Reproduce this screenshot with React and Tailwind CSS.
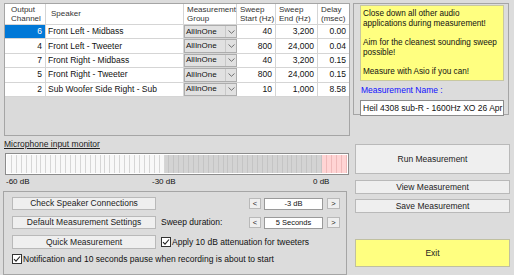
import React from 'react';

// ── Data ─────────────────────────────────────────────────────────────────────
const rows = [
  { ch: 6, name: 'Front Left - Midbass', start: '40', end: '3,200', delay: '0.00' },
  { ch: 4, name: 'Front Left - Tweeter', start: '800', end: '24,000', delay: '0.04' },
  { ch: 7, name: 'Front Right - Midbass', start: '40', end: '3,200', delay: '0.15' },
  { ch: 5, name: 'Front Right - Tweeter', start: '800', end: '24,000', delay: '0.15' },
  { ch: 2, name: 'Sub Woofer Side Right - Sub', start: '10', end: '1,000', delay: '8.58' },
];

const segments = Array.from({ length: 69 }, (_, i) => (i < 32 ? 'low' : i < 64 ? 'mid' : 'high'));

// ── Small pieces ─────────────────────────────────────────────────────────────
const Button = ({ children, className = '' }) => (
  <div className={`flex items-center justify-center border text-[#222] ${className}`}>
    {children}
  </div>
);

const Checkbox = () => (
  <span className="w-[10px] h-[10px] bg-white border border-[#333] flex items-center justify-center shrink-0">
    <svg width="8" height="8" viewBox="0 0 8 8">
      <path d="M1 4.2 L3 6.2 L7 1.5" fill="none" stroke="#222" strokeWidth="1.1" />
    </svg>
  </span>
);

const Stepper = ({ value }) => (
  <div className="flex items-center ml-auto">
    <Button className="w-[12px] h-[11px] text-[7.5px] bg-[#efefef] border-[#b9b9b9]">&lt;</Button>
    <div className="w-[59px] h-[12px] ml-[3px] bg-white border border-[#9a9a9a] flex items-center justify-center text-[7.5px]">
      {value}
    </div>
    <Button className="w-[13px] h-[11px] ml-[4px] text-[7.5px] bg-[#efefef] border-[#b9b9b9]">&gt;</Button>
  </div>
);

const HeadCell = ({ children, className = '' }) => (
  <div className={`h-full border-r border-[#d5d5d5] flex items-center leading-[9.5px] text-[8px] text-[#333] ${className}`}>
    {children}
  </div>
);

// ── App ──────────────────────────────────────────────────────────────────────
export default function App() {
  return (
    <div className="w-[514px] h-[275px] bg-[#dcdcdc] flex overflow-hidden text-[8.5px] text-[#111] font-['Liberation_Sans',Arial,sans-serif]">
      {/* left column */}
      <div className="w-[353px] shrink-0 flex flex-col pt-[3px]">
        {/* speaker table */}
        <div className="ml-[4px] w-[346px] h-[133px] border border-[#a5a5a5] bg-[#dadada]">
          <div className="h-[21px] bg-white flex border-b border-[#d5d5d5]">
            <HeadCell className="w-[41px] pl-[6px]">Output<br />Channel</HeadCell>
            <HeadCell className="w-[138px] pl-[5px]">Speaker</HeadCell>
            <HeadCell className="w-[53px] pl-[3px]">Measurement<br />Group</HeadCell>
            <HeadCell className="w-[39px] pl-[3px]">Sweep<br />Start (Hz)</HeadCell>
            <HeadCell className="w-[42px] pl-[3px]">Sweep<br />End (Hz)</HeadCell>
            <HeadCell className="w-[31px] pl-[3px] border-r-0">Delay<br />(msec)</HeadCell>
          </div>
          {rows.map((r, i) => (
            <div key={r.ch} className="h-[14.4px] flex bg-white border-b border-[#d5d5d5]">
              <div
                className={`w-[41px] h-full pr-[3px] flex items-center justify-end border-r border-[#d5d5d5] ${
                  i === 0 ? 'bg-[#0078d7] text-white' : ''
                }`}
              >
                {r.ch}
              </div>
              <div className="w-[138px] h-full pl-[2px] flex items-center border-r border-[#d5d5d5]">{r.name}</div>
              <div className="w-[53px] h-full flex items-center bg-[#e1e1e1] border border-[#adadad]">
                <span className="flex-1 pl-[1px] text-[8px]">AllInOne</span>
                <span className="w-[11px] h-full flex items-center justify-center border-l border-[#c8c8c8]">
                  <svg width="7" height="4" viewBox="0 0 7 4">
                    <path d="M0.5 0.5 L3.5 3.3 L6.5 0.5" fill="none" stroke="#666" strokeWidth="0.9" />
                  </svg>
                </span>
              </div>
              <div className="w-[39px] h-full pr-[3px] flex items-center justify-end border-r border-[#d5d5d5]">{r.start}</div>
              <div className="w-[42px] h-full pr-[3px] flex items-center justify-end border-r border-[#d5d5d5]">{r.end}</div>
              <div className="w-[31px] h-full pr-[3px] flex items-center justify-end">{r.delay}</div>
            </div>
          ))}
        </div>

        {/* microphone monitor */}
        <div className="ml-[4px] mt-[3px] h-[10px] leading-[10px] underline text-[#222]">Microphone input monitor</div>
        <div className="ml-[5px] mt-[4px] w-[344px] h-[22px] border border-[#8c8c8c] flex bg-white p-[1px]">
          {segments.map((s, i) => (
            <div
              key={i}
              className={`flex-1 h-full border-r ${
                s === 'low'
                  ? 'bg-[#f8f8f8] border-[#d6d6d6]'
                  : s === 'mid'
                  ? 'bg-[#d3d3d3] border-[#c4c4c4]'
                  : 'bg-[#ffd4d4] border-[#efb9b9]'
              }`}
            />
          ))}
        </div>
        <div className="ml-[6px] mt-[2px] h-[10px] leading-[10px] flex text-[8px]">
          <span className="w-[146px]">-60 dB</span>
          <span className="w-[161px]">-30 dB</span>
          <span>0 dB</span>
        </div>

        {/* settings panel */}
        <div className="ml-[3px] mt-[4px] w-[344px] h-[84px] border border-[#a5a5a5] flex flex-col pl-[8px] pr-[6px] pt-[5px]">
          <div className="flex items-center h-[13px]">
            <Button className="w-[144px] h-[13px] bg-[#efefef] border-[#b9b9b9]">Check Speaker Connections</Button>
            <Stepper value="-3 dB" />
          </div>
          <div className="flex items-center h-[13px] mt-[6px]">
            <Button className="w-[144px] h-[13px] bg-[#efefef] border-[#b9b9b9]">Default Measurement Settings</Button>
            <span className="ml-[5px]">Sweep duration:</span>
            <Stepper value="5 Seconds" />
          </div>
          <div className="flex items-center h-[14px] mt-[6px]">
            <Button className="w-[144px] h-[14px] bg-[#efefef] border-[#b9b9b9]">Quick Measurement</Button>
            <span className="ml-[5px] flex items-center gap-[1px]">
              <Checkbox />
              Apply 10 dB attenuation for tweeters
            </span>
          </div>
          <div className="flex items-center h-[12px] mt-[4px] gap-[1px]">
            <Checkbox />
            Notification and 10 seconds pause when recording is about to start
          </div>
        </div>
      </div>

      {/* right column */}
      <div className="flex flex-col pt-[3px]">
        <div className="w-[156px] h-[112px] border border-[#a5a5a5] pl-[6px] pr-[4px] pt-[1px]">
          <div className="h-[76px] bg-[#ffff80] border border-[#c8c8a0] px-[2px] pt-[3px] leading-[9.7px] text-[8.2px] text-[#111]">
            <div>Close down all other audio</div>
            <div>applications during measurement!</div>
            <div>&nbsp;</div>
            <div className="whitespace-nowrap">Aim for the cleanest sounding sweep</div>
            <div>possible!</div>
            <div>&nbsp;</div>
            <div>Measure with Asio if you can!</div>
          </div>
          <div className="mt-[4px] h-[10px] leading-[10px] pl-[1px] text-[#1010ff]">Measurement Name :</div>
          <div className="mt-[5px] h-[16px] bg-white border border-[#8c8c8c] px-[2px] flex items-center overflow-hidden whitespace-nowrap">
            Heil 4308 sub-R - 1600Hz XO 26 Apr
          </div>
        </div>

        <Button className="ml-[2px] mt-[29px] w-[155px] h-[30px] bg-[#efefef] border-[#b9b9b9]">Run Measurement</Button>
        <Button className="ml-[2px] mt-[6px] w-[155px] h-[14px] bg-[#efefef] border-[#b9b9b9]">View Measurement</Button>
        <Button className="ml-[2px] mt-[5px] w-[155px] h-[14px] bg-[#efefef] border-[#b9b9b9]">Save Measurement</Button>
        <Button className="ml-[2px] mt-[26px] w-[155px] h-[28px] bg-[#ffff80] border-[#c0c0a0]">Exit</Button>
      </div>
    </div>
  );
}
